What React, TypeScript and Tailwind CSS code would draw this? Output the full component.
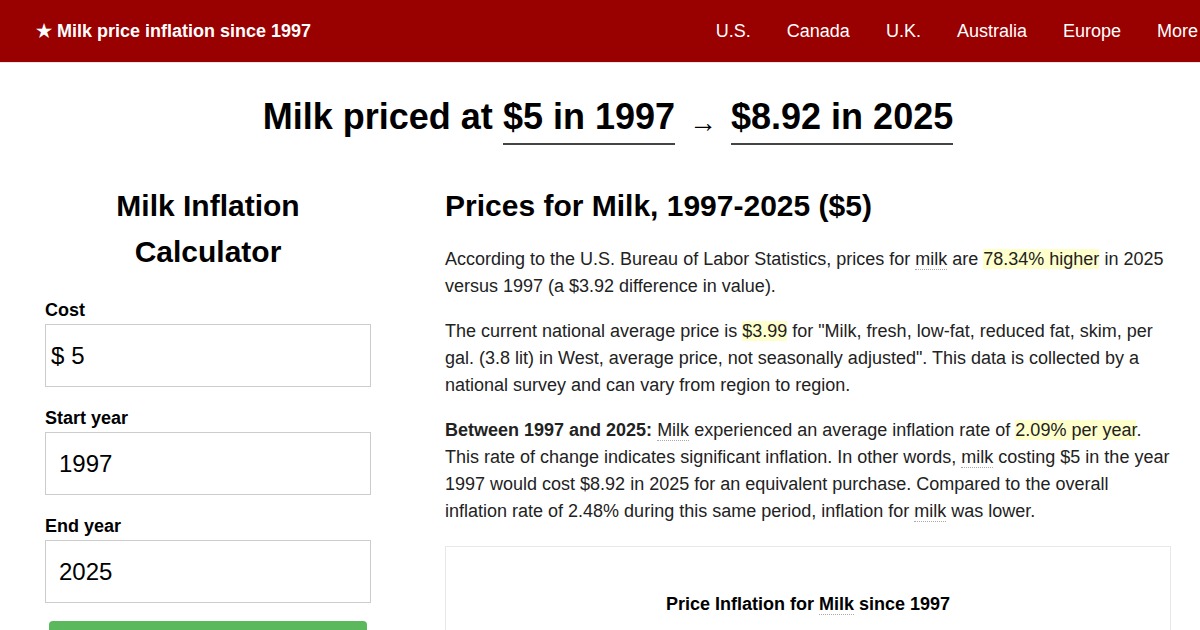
import React from 'react';

const navLinks = ['U.S.', 'Canada', 'U.K.', 'Australia', 'Europe', 'More'];

function Abbr({ children }: { children: React.ReactNode }) {
  return <span className="border-b border-dotted border-[#aaa]">{children}</span>;
}

function Mark({ children }: { children: React.ReactNode }) {
  return <span className="bg-[#ffffcc]">{children}</span>;
}

function Field({ label, value, prefix, first }: { label: string; value: string; prefix?: string; first?: boolean }) {
  return (
    <div className={first ? 'mt-[25px]' : 'mt-[21px]'}>
      <label className="block text-[18px] font-bold leading-[20px] mb-[4px] text-black">{label}</label>
      <div className="flex items-center h-[63px] border border-[#ccc] bg-white text-[24px] text-black">
        {prefix ? (
          <>
            <span className="pl-[5px] pr-[7px]">{prefix}</span>
            <input readOnly value={value} className="w-full outline-none bg-transparent" />
          </>
        ) : (
          <input readOnly value={value} className="w-full pl-[13px] outline-none bg-transparent" />
        )}
      </div>
    </div>
  );
}

export default function App() {
  return (
    <div className="min-h-[630px] bg-white text-[#222]" style={{ fontFamily: '"Liberation Sans", Arial, sans-serif' }}>
      {/* Navbar */}
      <header className="flex items-center h-[62px] bg-[#990000] overflow-hidden border-b border-[#e7e7e7] box-content">
        <div className="pl-[36px] text-[18px] font-bold text-white whitespace-nowrap">★ Milk price inflation since 1997</div>
        <nav className="ml-auto -mr-4 flex shrink-0">
          {navLinks.map((l) => (
            <a key={l} className="px-[18px] text-[18px] text-white whitespace-nowrap">
              {l}
            </a>
          ))}
        </nav>
      </header>

      <div className="pl-[45px] w-[1171px]">
        {/* Headline */}
        <h1 className="mt-[32px] text-center text-[36px] font-bold leading-[44px] text-black whitespace-nowrap">
          Milk priced at <span className="pb-[6px] border-b-2 border-[#444]">$5 in 1997</span>{' '}
          <span className="mx-[4px] text-[28px] font-normal align-[-3px]">→</span>{' '}
          <span className="pb-[6px] border-b-2 border-[#444]">$8.92 in 2025</span>
        </h1>

        <div className="flex gap-[74px] mt-[38px]">
          {/* Calculator */}
          <div className="w-[326px] shrink-0">
            <h2 className="text-center text-[30px] font-bold leading-[46px] text-black">
              Milk Inflation
              <br />
              Calculator
            </h2>
            <Field label="Cost" value="5" prefix="$" first />
            <Field label="Start year" value="1997" />
            <Field label="End year" value="2025" />
            <button className="mt-[18px] ml-[4px] w-[318px] h-[46px] rounded-[4px] bg-[#5cb85c] text-white text-[18px]">
              Calculate
            </button>
          </div>

          {/* Article */}
          <div className="w-[726px] text-[18px] leading-[27px]">
            <h2 className="text-[30px] font-bold leading-[46px] text-black mb-[17px]">Prices for Milk, 1997-2025 ($5)</h2>
            <p className="mb-[18px]">
              According to the U.S. Bureau of Labor Statistics, prices for <Abbr>milk</Abbr> are{' '}
              <Mark>78.34% higher</Mark> in 2025 versus 1997 (a $3.92 difference in value).
            </p>
            <p className="mb-[18px]">
              The current national average price is <Mark>$3.99</Mark> for "Milk, fresh, low-fat, reduced fat, skim, per
              gal. (3.8 lit) in West, average price, not seasonally adjusted". This data is collected by a national
              survey and can vary from region to region.
            </p>
            <p>
              <b>Between 1997 and 2025:</b> <Abbr>Milk</Abbr> experienced an average inflation rate of{' '}
              <Mark>2.09% per year</Mark>. This rate of change indicates significant inflation. In other words,{' '}
              <Abbr>milk</Abbr> costing $5 in the year 1997 would cost $8.92 in 2025 for an equivalent purchase.
              Compared to the overall inflation rate of 2.48% during this same period, inflation for <Abbr>milk</Abbr>{' '}
              was lower.
            </p>

            <div className="mt-[21px] border border-[#e8e8e8] pt-[44px] h-[200px]">
              <div className="text-center font-bold text-black">
                Price Inflation for <Abbr>Milk</Abbr> since 1997
              </div>
            </div>
          </div>
        </div>
      </div>
    </div>
  );
}
